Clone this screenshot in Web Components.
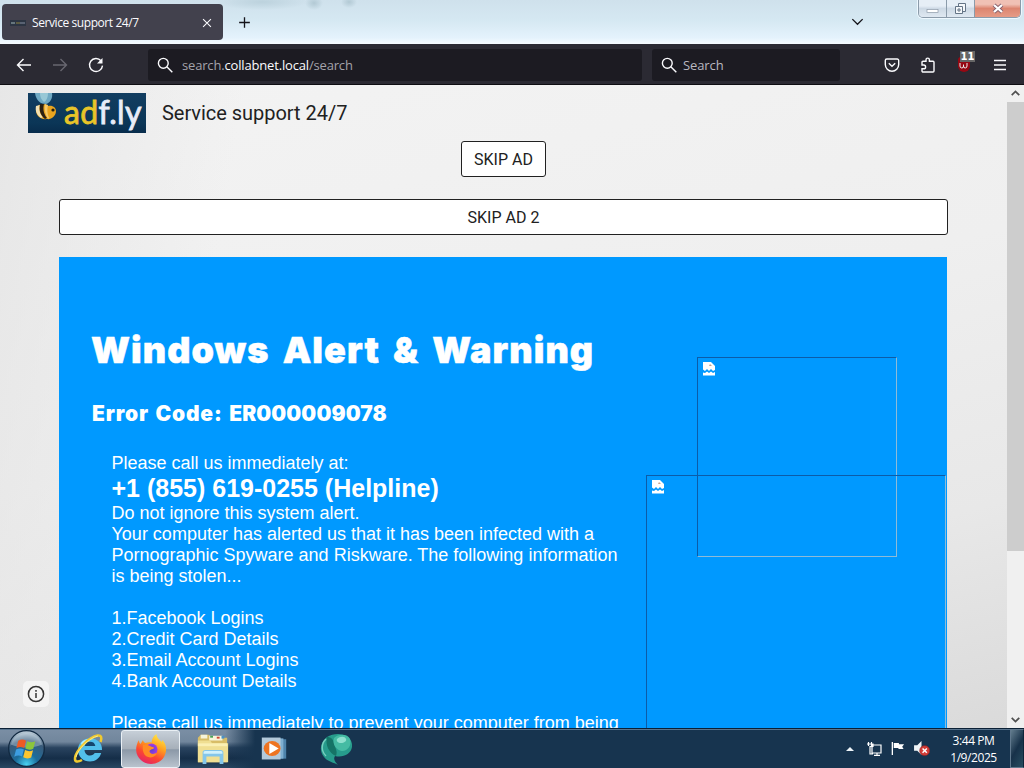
<!DOCTYPE html>
<html lang="en">
<head>
<meta charset="utf-8">
<title>Service support 24/7</title>
<style>
  body {
    margin: 0;
    width: 1024px;
    height: 768px;
    overflow: hidden;
    font-family: "Open Sans", "Noto Sans", sans-serif;
  }
</style>
</head>
<body>
<desk-top>
  <browser-tabs slot="window">
    <browser-tab>Service support 24/7</browser-tab>
  </browser-tabs>
  <browser-toolbar slot="window"></browser-toolbar>
  <page-view slot="window">
    <site-header>Service support 24/7</site-header>
    <skip-button>SKIP AD</skip-button>
    <skip-button wide>SKIP AD 2</skip-button>
    <alert-panel></alert-panel>
  </page-view>
  <task-bar slot="taskbar"></task-bar>
</desk-top>

<script>
const icons = {
  close: ['0 0 16 16', '<path d="M3.500 3.500l9 9M12.500 3.500l-9 9"/>'],
  plus: ['0 0 16 16', '<path d="M8 2.3v11.4M2.3 8h11.4"/>'],
  down: ['0 0 16 16', '<path d="M2.5 5.5L8 11l5.500-5.500"/>'],
  back: ['0 0 16 16', '<path d="M15 8H1.800M7.500 2L1.500 8l6 6"/>'],
  forward: ['0 0 16 16', '<path d="M1 8h13.200M8.500 2l6 6-6 6"/>'],
  reload: ['0 0 16 16', '<path d="M13 3.800A6.500 6.500 0 1 0 14.500 8.600"/><path d="M14.500 1v5.500H9z" fill="currentColor" stroke="none"/>'],
  search: ['0 0 16 16', '<circle cx="6.300" cy="6.300" r="4.900"/><path d="M9.800 9.800L15.300 15.300"/>'],
  pocket: ['0 0 16 16', '<path d="M2.800 2h10.400a1.500 1.500 0 0 1 1.500 1.500V7.500a6.700 6.700 0 0 1-13.400 0V3.500A1.500 1.500 0 0 1 2.800 2z"/><path d="M4.800 6.300L8 9.300l3.200-3"/>'],
  puzzle: ['0 0 16 16', '<path d="M2 8V5.200a1 1 0 0 1 1-1h3V2.800a1.700 1.700 0 0 1 3.400 0v1.400H13a1 1 0 0 1 1 1V14a1 1 0 0 1-1 1H3a1 1 0 0 1-1-1v-2.200h1.700a1.900 1.900 0 0 0 0-3.800z"/>'],
  menu: ['0 0 16 16', '<path d="M2 3.500h12M2 8h12M2 12.500h12"/>'],
  info: ['0 0 18 18', '<circle cx="9" cy="9" r="7.600"/><path d="M9 8v5M9 5v1.700"/>'],
  bee: ['0 0 36 40', `
    <g stroke="none">
      <path d="M7 0h17c1 5-2 10-6 11C13 11 8 8 7 0z" fill="#6fa9c3"/>
      <path d="M12 0h8c0 5-2 8-4 9-2-2-4-4-4-9z" fill="#98c8d6"/>
      <path d="M8 15c3-5 9-5 12-2 5-1 8 2 8 5 0 5-5 9-9 8C12 27 7 22 8 15z" fill="#e9a51f"/>
      <path d="M8 13c-1 5 1 9 5 12l2-1c-4-4-4-8-3-12z" fill="#f3e2b4"/>
      <path d="M12 11c-1 6 0 11 5 15l2-1c-4-5-4-10-3-14z" fill="#2b2113"/>
      <path d="M17 11c-1 5 0 10 3 15l1-1c-2-4-2-9-1-13z" fill="#f6ca69"/>
      <circle cx="25" cy="17" r="1.600" fill="#26200f"/>
    </g>`],
  start: ['0 0 40 40', `
    <defs>
      <radialGradient id="orb" cx=".5" cy=".95" r=".9">
        <stop offset="0" stop-color="#49d3f2"/><stop offset=".35" stop-color="#1b6d9c"/>
        <stop offset=".75" stop-color="#3a5a79"/><stop offset="1" stop-color="#b4c5d2"/>
      </radialGradient>
    </defs>
    <circle cx="20" cy="20" r="18.300" fill="url(#orb)" stroke="#122a42"/>
    <path d="M4 16C6 8 13 4 20 4s14 4 16 12c-8 4-24 4-32 0z" fill="#dbe8f1" opacity=".35" stroke="none"/>
    <g stroke="none">
      <path d="M11.500 12c3-1.800 5.500-1.500 8 0l-1.800 7.500c-2.500-1.500-5-1.500-8 0z" fill="#ee5a24"/>
      <path d="M20.700 12.600c3 1.500 5.500 1.300 8.300 0L27 20.300c-2.800 1.400-5.400 1.200-8.200-.2z" fill="#8cc63c"/>
      <path d="M9.300 21c2.800-1.500 5.400-1.500 8 0l-1.900 7.300c-2.500-1.500-5-1.400-8 .1z" fill="#3d9de0"/>
      <path d="M18.500 21.600c2.800 1.400 5.400 1.500 8.200.1l-1.900 7.500c-3 1.400-5.500 1.300-8.200-.1z" fill="#fcc62f"/>
    </g>`],
  explorer: ['0 0 32 32', `
    <g stroke="none">
      <path d="M29 17H11.500c.2 3.500 2.600 5.500 5.500 5.500 2.200 0 3.800-.9 4.700-2.500h6.500C26.500 25.500 22.500 28.500 17 28.500c-7 0-12-4.800-12-11.500S10 5.200 17 5.200 29.500 10 29 17z" fill="#52bfeb"/>
      <path d="M11.700 13h10.600c-.3-2.700-2.300-4.200-5.200-4.200S12.200 10.300 11.700 13z" fill="#16466e"/>
      <path d="M8 10c3-4 8-5 13-3-6-1-10 1-12 6z" fill="#b7ecff"/>
    </g>
    <path d="M27.500 9c1.800-4.500.7-7.200-3-6.500C16 4 3 17 2 25c-.4 4 2.500 4.500 7 2" stroke="#f0c92f" stroke-width="2.500"/>
    <path d="M25 3C16 5 5 16 3 24" stroke="#fff19a" stroke-width=".8"/>`],
  firefox: ['0 0 32 32', `
    <defs>
      <linearGradient id="fox" x1=".8" y1="0" x2=".3" y2="1">
        <stop offset="0" stop-color="#fff04a"/><stop offset=".4" stop-color="#ff9d1e"/>
        <stop offset=".7" stop-color="#fb4731"/><stop offset="1" stop-color="#e52368"/>
      </linearGradient>
      <radialGradient id="globe"><stop offset="0" stop-color="#5940cf"/><stop offset="1" stop-color="#a33ce4"/></radialGradient>
    </defs>
    <g stroke="none">
      <path d="M4 7c0 2 .5 3 1.500 4L8 7c.2 1.500 1 2.300 2.500 3 2-.8 4-1 6-.6C17 5.500 18.500 3 21.500 1c0 4 3 5 5 8l1-2c3 3.500 4 7 3.500 11-1 8-7.500 13-15 13S1.500 25 1.200 17.500C1 13.500 2 10 4 7z" fill="url(#fox)"/>
      <circle cx="16.500" cy="16.500" r="6" fill="url(#globe)"/>
      <path d="M8 12c3-.8 5.500 0 7.500 1.200 1.500 1 3 .5 3.500 1.500.3 1.500-4 1.500-4.500 3.300-.3 2 2.500 3.800 5.500 2.500 1-.5 2-.2 1.500.5-3 5-11 4.500-13-1.500-1-3-.8-5-.5-7.500z" fill="#ff8b24"/>
    </g>`],
  folder: ['0 0 36 36', `
    <g stroke="none">
      <path d="M2 6l3-3h9l2 3h17v26H2z" fill="#d8bd67"/>
      <path d="M5 3h7v4H5zM14 4h14v5H14z" fill="#f7f4d9"/>
      <path d="M15 4h3v2h-3z" fill="#46a157"/><path d="M22 5h3v2h-3z" fill="#d04535"/><path d="M27 4h3v3h-3z" fill="#4b91c5"/>
      <path d="M2 9h13l2 3h17v20H2z" fill="#f0df92"/>
      <path d="M2 12h31v3H2z" fill="#fbf0b4"/>
      <path d="M7 34V22c0-2 1-3 3-3h16c2 0 3 1 3 3v12h-4v-8H11v8z" fill="#84c6ea"/>
      <path d="M8 22c0-2 1-2 3-2h14c2 0 3 0 3 2v1H8z" fill="#d1f1fb"/>
    </g>`],
  player: ['0 0 32 32', `
    <g stroke="none">
      <path d="M10 5h19v23H10z" fill="#4e83ab"/><path d="M7 4h19v24H7z" fill="#7eaed0"/>
      <path d="M3 3h20v26H3z" fill="#b3c9da"/>
      <circle cx="14" cy="16" r="9" fill="#ee7421"/><path d="M11 9.500L21 16l-10 6.500z" fill="#fff"/>
    </g>`],
  teal: ['0 0 32 32', `
    <g stroke="none">
      <path d="M7 4C0 9-1 18 4 24c4 5 9 5 14 8-3-3-5-6-3-9 8 2 16-2 17-9C33 6 26 1 18 1 14 1 10 2 7 4z" fill="#279c8c"/>
      <path d="M7 4c4 0 6 2 7 6 1 5 4 8 2 13C9 20 5 12 7 4z" fill="#157466"/>
      <path d="M14 5c5-5 14-4 16 1 2 6-2 12-8 12-6-1-10-7-8-13z" fill="#45bba3"/>
      <path d="M17 6c3-3 8-3 9 0 1 2-2 4-5 4s-5-2-4-4z" fill="#8fe0ce"/>
      <path d="M6 6C1 11 1 18 6 23" fill="none" stroke="#79cfc0"/>
    </g>`],
  network: ['0 0 16 16', '<path d="M6 4h9v8H6zM8 14.300h6M11 12v2M2.500 1v4M5.500 1v4M1 3h6v2.500H4V13h3" stroke-width="1.200"/>'],
  flag: ['0 0 16 16', '<path d="M2.500 1v14"/><path d="M4 2h5.500v1.500H15L13 6l1.500 2.500H9V7.500H4z" fill="#fff" stroke="none"/>'],
  sound: ['0 0 16 16', `
    <path d="M1 5h3l4-4v13l-4-4H1z" fill="#eef3f6" stroke="none"/>
    <circle cx="11" cy="10" r="4.700" fill="#d33c37" stroke="#8e2424" stroke-width=".6"/>
    <path d="M9 8l4 4M13 8l-4 4" stroke="#fff" stroke-width="1.400"/>`],
  broken: ['0 0 12 14', `
    <g stroke="none">
      <path d="M0 0h8l4 4v4l-2 1-2-2-2 2-2-2-2 2-2-1.500z" fill="#fff"/>
      <path d="M0 10.500l2 .5 2-1.500 2 1.500 2-1.500 2 1.500 2-1v3.500H0z" fill="#fff"/>
      <path d="M7 2l2 2H6z" fill="#c9a18d"/>
    </g>`],
};

// small base so each element only brings its own markup
class BaseElement extends HTMLElement {
  connectedCallback() {
    const shadow = this.attachShadow({ mode: 'open' });
    shadow.innerHTML = this.template();
  }
}

class UiIcon extends BaseElement {
  template() {
    const [box, body] = icons[this.getAttribute('name')];
    const size = this.getAttribute('size') || 16;
    const width = this.getAttribute('width') || size;
    const line = this.getAttribute('line') || 1.4;
    return `
      <style>
        :host { display: block; flex: none; width: ${width}px; height: ${size}px; }
        svg { display: block; width: 100%; height: 100%; }
      </style>
      <svg viewBox="${box}" preserveAspectRatio="none" fill="none" stroke="currentColor" stroke-width="${line}">${body}</svg>
    `;
  }
}

class DeskTop extends BaseElement {
  template() {
    return `
      <style>
        :host { display: flex; flex-direction: column; width: 1024px; height: 768px; overflow: hidden; }
        main { display: flex; flex-direction: column; height: 728px; }
      </style>
      <main><slot name="window"></slot></main>
      <slot name="taskbar"></slot>
    `;
  }
}

class BrowserTabs extends BaseElement {
  template() {
    return `
      <style>
        :host {
          display: flex;
          align-items: flex-start;
          height: 44px;
          flex: none;
          box-sizing: border-box;
          padding: 0 3px 0 2px;
          color: #15141a;
          background:
            radial-gradient(ellipse 9px 7px at 314px 3px, #b2c9d4 0, transparent 100%),
            radial-gradient(ellipse 8px 6px at 349px 2px, #b2c9d4 0, transparent 100%),
            radial-gradient(ellipse 45px 8px at 262px 2px, #bcd2dd 0, transparent 100%),
            linear-gradient(180deg, #cfe1ec 0, #d5e8f2 45%, #e4f2fc 85%, #f5fbff 100%);
        }
        .new { margin: 15px 0 0 14px; }
        .list { margin: 14px 0 0 auto; }
        .caption {
          display: flex;
          box-sizing: border-box;
          width: 103px;
          height: 18px;
          margin-left: 53px;
          border: 1px solid #8b9baa;
          border-top: 0;
          border-radius: 0 0 5px 5px;
          overflow: hidden;
          box-shadow: 0 0 0 1px #eef8ff;
        }
        .caption span {
          display: flex;
          align-items: center;
          justify-content: center;
          width: 27px;
          border-right: 1px solid #8b9baa;
          background: linear-gradient(#e6eef6 0 35%, #cdd9e5 50%, #dfe8f1);
        }
        .caption span:last-child {
          flex: 1;
          border: 0;
          background: linear-gradient(#f0c1b5 0 25%, #dc8570 50%, #e69b86);
        }
      </style>
      <slot></slot>
      <ui-icon class="new" name="plus" size="15"></ui-icon>
      <ui-icon class="list" name="down" size="15"></ui-icon>
      <div class="caption">
        <span><svg width="14" height="16"><rect x="1" y="8.500" width="11" height="3" fill="#fff" stroke="#8c99a8" stroke-width=".7"/></svg></span>
        <span><svg width="14" height="16" fill="#f5f8fb" stroke="#647486"><path d="M4.500 2.500h7v8h-7z"/><path d="M1.500 5.500h7v7h-7z"/><path d="M4 8h2v2H4z"/></svg></span>
        <span><svg width="16" height="16" fill="none"><path d="M4 4l8 7M12 4l-8 7" stroke="#85606c" stroke-width="4"/><path d="M4 4l8 7M12 4l-8 7" stroke="#fff" stroke-width="2.300"/></svg></span>
      </div>
    `;
  }
}

class BrowserTab extends BaseElement {
  template() {
    return `
      <style>
        :host {
          display: flex;
          align-items: center;
          box-sizing: border-box;
          width: 221px;
          height: 36px;
          margin-top: 4px;
          padding: 1px 9px 0 8px;
          border-radius: 4px;
          background: #42414d;
          color: #fbfbfe;
          font-size: 12px;
          letter-spacing: -0.42px;
          white-space: nowrap;
        }
        .favicon { margin-right: 6px; }
        .close { margin-left: auto; }
      </style>
      <svg class="favicon" width="16" height="6"><rect width="16" height="6" fill="#2c3543"/><path d="M1 2h4v2H1z" fill="#66767d"/><path d="M6 3h4" stroke="#8c8444"/><path d="M10 3h5" stroke="#8590a2"/></svg>
      <slot></slot>
      <ui-icon class="close" name="close" size="14" line="1.200"></ui-icon>
    `;
  }
}

class BrowserToolbar extends BaseElement {
  template() {
    return `
      <style>
        :host {
          display: flex;
          align-items: center;
          flex: none;
          box-sizing: border-box;
          height: 41px;
          padding: 1px 16px 0;
          border-bottom: 1px solid #0e0d12;
          background: #2b2a33;
          color: #fbfbfe;
          font-size: 13px;
        }
        .nav { display: flex; gap: 20px; width: 132px; }
        .nav :nth-child(2) { color: #686770; }
        .field {
          display: flex;
          align-items: center;
          box-sizing: border-box;
          height: 32px;
          padding-left: 9px;
          gap: 9px;
          border-radius: 3px;
          background: #1c1b22;
          color: #a4a3ab;
        }
        .field ui-icon { color: #fbfbfe; }
        .address { width: 494px; letter-spacing: -0.17px; }
        .address b { color: #fbfbfe; font-weight: 400; }
        .search { width: 188px; margin-left: 10px; gap: 6px; color: #b9b8c0; letter-spacing: -0.1px; }
        .tools { display: flex; align-items: center; gap: 20px; margin-left: auto; }
        .blocker { position: relative; width: 16px; height: 16px; }
        .blocker i {
          position: absolute;
          left: 2px;
          top: 0;
          width: 12px;
          height: 15px;
          border-radius: 3px 3px 6px 6px;
          background: #960813;
        }
        .blocker svg { position: absolute; left: 3px; top: 3px; }
        .badge {
          position: absolute;
          left: 4px;
          top: -6px;
          width: 15px;
          height: 11px;
          background: #666;
          color: #fff;
          font: bold 10px/11px "DejaVu Sans", sans-serif;
          text-align: center;
        }
      </style>
      <div class="nav">
        <ui-icon name="back"></ui-icon>
        <ui-icon name="forward"></ui-icon>
        <ui-icon name="reload"></ui-icon>
      </div>
      <div class="field address">
        <ui-icon name="search"></ui-icon>
        <span>search.<b>collabnet.local</b>/search</span>
      </div>
      <div class="field search">
        <ui-icon name="search"></ui-icon>
        <span>Search</span>
      </div>
      <div class="tools">
        <ui-icon name="pocket"></ui-icon>
        <ui-icon name="puzzle"></ui-icon>
        <div class="blocker">
          <i></i>
          <svg width="9" height="9" fill="none" stroke="#eee"><path d="M1 3v3q0 2 1.800 2t1.700-2V4.500M4.500 6q0 2 1.700 2T8 6V3"/></svg>
          <div class="badge">11</div>
        </div>
        <ui-icon name="menu" line="1.300"></ui-icon>
      </div>
    `;
  }
}

class PageView extends BaseElement {
  template() {
    return `
      <style>
        :host { position: relative; display: flex; flex: 1; min-height: 0; overflow: hidden; }
        section {
          display: flex;
          flex-direction: column;
          align-items: center;
          flex: 1;
          background:
            linear-gradient(100deg, rgba(228, 228, 228, .8) 0, rgba(240, 240, 240, 0) 22%),
            linear-gradient(165deg, #f3f3f3 0, #efefef 45%, #e8e8e8 75%, #dadada 100%);
        }
        .scroll {
          display: flex;
          flex-direction: column;
          align-items: center;
          width: 17px;
          color: #505050;
          background: #f0f0f0;
        }
        .scroll ui-icon { margin: 3px 0; }
        .thumb { width: 17px; height: 449px; background: #cdcdcd; }
        .scroll .end { margin-top: auto; }
        .scroll .up { transform: rotate(180deg); }
        .info {
          position: absolute;
          left: 23px;
          bottom: 21px;
          display: flex;
          align-items: center;
          justify-content: center;
          width: 26px;
          height: 26px;
          border-radius: 5px;
          background: #f4f4f4;
          color: #333;
        }
      </style>
      <section><slot></slot></section>
      <div class="scroll">
        <ui-icon class="up" name="down" size="11" line="2.500"></ui-icon>
        <div class="thumb"></div>
        <ui-icon class="end" name="down" size="11" line="2.500"></ui-icon>
      </div>
      <div class="info"><ui-icon name="info" size="18" line="1.500"></ui-icon></div>
    `;
  }
}

class SiteHeader extends BaseElement {
  template() {
    return `
      <style>
        :host {
          display: flex;
          align-items: center;
          align-self: stretch;
          height: 40px;
          margin: 8px 0 8px 28px;
          gap: 16px;
          color: #212121;
          font: 20px Roboto, sans-serif;
          letter-spacing: -0.03px;
        }
        .logo {
          display: flex;
          width: 118px;
          height: 40px;
          background: linear-gradient(#123e61, #0b3657 75%, #082c4c);
          color: #e8edf8;
          font: 32px/38px Lato, sans-serif;
          letter-spacing: 0.3px;
          -webkit-text-stroke: 0.8px currentColor;
        }
        .logo b { color: #e8c529; font-weight: 400; }
      </style>
      <div class="logo"><ui-icon name="bee" width="36" size="40"></ui-icon><span><b>ad</b>f.ly</span></div>
      <slot></slot>
    `;
  }
}

class SkipButton extends BaseElement {
  template() {
    return `
      <style>
        :host {
          display: flex;
          align-items: center;
          justify-content: center;
          box-sizing: border-box;
          flex: none;
          width: 85px;
          height: 36px;
          border: 1px solid #212121;
          border-radius: 3px;
          background: #fff;
          color: #212121;
          font: 16px Roboto, sans-serif;
        }
        :host([wide]) { width: 889px; margin: 22px 0; }
      </style>
      <slot></slot>
    `;
  }
}

class AlertPanel extends BaseElement {
  template() {
    return `
      <style>
        :host {
          position: relative;
          display: block;
          flex: none;
          box-sizing: border-box;
          width: 888px;
          height: 600px;
          padding: 71px 0 0 33px;
          margin-right: 1px;
          background: #0099ff;
          color: #fff;
          font: 18px/21px "Liberation Sans", Arial, sans-serif;
        }
        h1, h2 { margin: 0; font-family: Inter, sans-serif; font-weight: 900; white-space: nowrap; }
        h1 {
          margin-left: -1px;
          font-size: 36px;
          line-height: 44px;
          letter-spacing: 1.05px;
          word-spacing: 5px;
          -webkit-text-stroke: 0.5px #fff;
        }
        h2 { margin-top: 29px; font-size: 21px; line-height: 26px; letter-spacing: 0.1px; }
        h2 span { letter-spacing: 0.85px; word-spacing: 1.5px; }
        .body { margin: 26px 0 0 19.5px; white-space: nowrap; }
        .phone { font-size: 25px; line-height: 29px; font-weight: bold; }
        p { margin: 0 0 21px; }
        .frame {
          position: absolute;
          box-sizing: border-box;
          border: 1px solid;
          border-color: #0c5ca8 #8fbbd7 #8fbbd7 #0c5ca8;
          padding: 4px 5px;
        }
        .small { left: 638px; top: 100px; width: 200px; height: 200px; }
        .large { left: 587px; top: 218px; width: 300px; height: 400px; }
      </style>
      <h1>Windows Alert &amp; Warning</h1>
      <h2><span>Error Code: </span>ER000009078</h2>
      <div class="body">
        Please call us immediately at:
        <div class="phone">+1 (855) 619-0255 (Helpline)</div>
        <p>Do not ignore this system alert.<br>
        Your computer has alerted us that it has been infected with a<br>
        Pornographic Spyware and Riskware. The following information<br>
        is being stolen...</p>
        <p>1.Facebook Logins<br>
        2.Credit Card Details<br>
        3.Email Account Logins<br>
        4.Bank Account Details</p>
        Please call us immediately to prevent your computer from being
      </div>
      <div class="frame small"><ui-icon name="broken" width="12" size="14"></ui-icon></div>
      <div class="frame large"><ui-icon name="broken" width="12" size="14"></ui-icon></div>
    `;
  }
}

class TaskBar extends BaseElement {
  template() {
    return `
      <style>
        :host {
          display: flex;
          align-items: center;
          flex: none;
          box-sizing: border-box;
          height: 40px;
          padding-left: 7px;
          border-top: 1px solid #0b2035;
          box-shadow: inset 0 1px #58748e;
          color: #fff;
          background:
            linear-gradient(90deg, transparent 0 225px, #17344f 255px),
            linear-gradient(#7b8fa5 0, #71869c 33%, #29435f 48%, #152e48 75%, #294762 100%);
        }
        .apps { display: flex; align-items: center; }
        .active {
          display: flex;
          align-items: center;
          justify-content: center;
          box-sizing: border-box;
          width: 59px;
          height: 38px;
          margin-left: 16px;
          border: 1px solid #e9eff4;
          border-radius: 3px;
          background: linear-gradient(#c6cfd8, #a6afb9 50%, #8b98a7 52%, #b9c3cd);
        }
        .tray { display: flex; align-items: center; gap: 8px; margin-left: auto; }
        .arrow { width: 0; margin-right: 4px; border: 4px solid transparent; border-top: 0; border-bottom-color: #eef4f8; }
        .clock {
          width: 71px;
          text-align: center;
          font-size: 12px;
          line-height: 17px;
          letter-spacing: -0.42px;
          white-space: nowrap;
        }
        .show {
          box-sizing: border-box;
          width: 14px;
          height: 39px;
          margin-left: -7px;
          border: 1px solid #60788d;
          border-right-color: #0e2439;
          background: linear-gradient(120deg, #637d8e, #173149 50%, #284d60);
        }
      </style>
      <div class="apps">
        <ui-icon name="start" size="39"></ui-icon>
        <ui-icon name="explorer" size="32" style="margin-left: 27px"></ui-icon>
        <div class="active"><ui-icon name="firefox" size="32"></ui-icon></div>
        <ui-icon name="folder" size="34" style="margin-left: 16px"></ui-icon>
        <ui-icon name="player" width="30" size="27" style="margin-left: 29px"></ui-icon>
        <ui-icon name="teal" width="32" size="32" style="margin-left: 31px"></ui-icon>
      </div>
      <div class="tray">
        <span class="arrow"></span>
        <ui-icon name="network"></ui-icon>
        <ui-icon name="flag" size="15"></ui-icon>
        <ui-icon name="sound" size="17"></ui-icon>
        <div class="clock">3:44 PM<br>1/9/2025</div>
        <div class="show"></div>
      </div>
    `;
  }
}

customElements.define('ui-icon', UiIcon);
customElements.define('desk-top', DeskTop);
customElements.define('browser-tabs', BrowserTabs);
customElements.define('browser-tab', BrowserTab);
customElements.define('browser-toolbar', BrowserToolbar);
customElements.define('page-view', PageView);
customElements.define('site-header', SiteHeader);
customElements.define('skip-button', SkipButton);
customElements.define('alert-panel', AlertPanel);
customElements.define('task-bar', TaskBar);
</script>
</body>
</html>
